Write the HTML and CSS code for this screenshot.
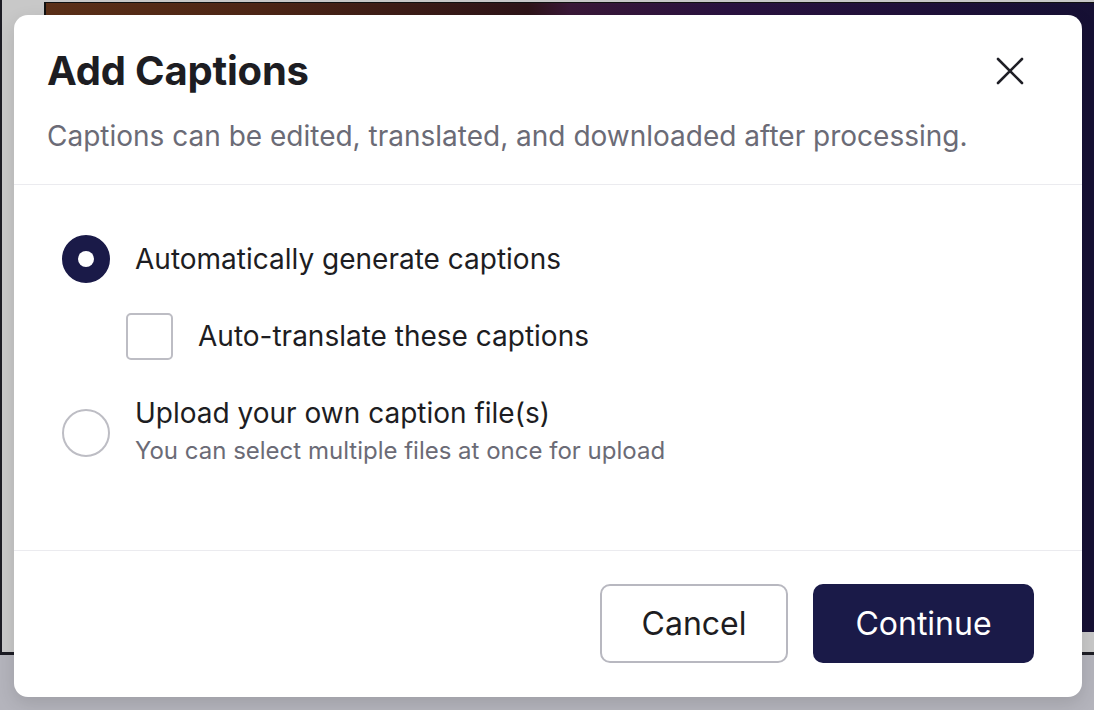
FILE: index.html
```html
<!DOCTYPE html>
<html lang="en">
<head>
<meta charset="utf-8">
<title>Add Captions</title>
<link rel="stylesheet" href="styles.css">
</head>
<body>
<div class="app">
  <div class="stage">
    <div class="thumb"></div>
  </div>
</div>

<div class="modal" role="dialog" aria-labelledby="dlg-title">
  <header class="modal-head">
    <div class="head-row">
      <h1 id="dlg-title" class="title">Add Captions</h1>
      <button class="close" aria-label="Close">
        <svg width="28" height="28" viewBox="0 0 28 28"><path d="M2 2 L26 26 M26 2 L2 26" stroke="#1f1f26" stroke-width="2.6" stroke-linecap="round"/></svg>
      </button>
    </div>
    <p class="subtitle">Captions can be edited, translated, and downloaded after processing.</p>
  </header>

  <div class="modal-body">
    <label class="option">
      <span class="radio checked"></span>
      <span class="opt-text">Automatically generate captions</span>
    </label>
    <label class="option sub">
      <span class="checkbox"></span>
      <span class="opt-text">Auto-translate these captions</span>
    </label>
    <label class="option stacked">
      <span class="radio"></span>
      <span class="opt-stack">
        <span class="opt-text">Upload your own caption file(s)</span>
        <span class="hint">You can select multiple files at once for upload</span>
      </span>
    </label>
  </div>

  <footer class="modal-foot">
    <button class="btn btn-secondary">Cancel</button>
    <button class="btn btn-primary">Continue</button>
  </footer>
</div>
</body>
</html>
```

FILE: styles.css
```css
* { box-sizing: border-box; }

html, body {
  margin: 0;
  padding: 0;
}

body {
  width: 1094px;
  height: 710px;
  overflow: hidden;
  background: #b4b4bc;
  font-family: Inter, "Noto Sans", "Liberation Sans", sans-serif;
  position: relative;
}

.app {
  height: 655px;
  background: #c8c8c8;
  border-left: 2px solid #1c1c24;
  border-bottom: 3px solid #1c1c24;
  padding: 2px 0 20px 42px;
}

.stage {
  height: 630px;
}

.thumb {
  height: 100%;
  border-left: 2px solid #111;
  border-top: 1px solid #111;
  background: linear-gradient(90deg, #5c3018 0%, #4e2616 20%, #2e1418 46%, #3a1838 50%, #2a1240 65%, #161034 100%);
}

.modal {
  position: absolute;
  left: 14px;
  top: 15px;
  width: 1068px;
  height: 682px;
  background: #fff;
  border-radius: 14px;
  box-shadow: 0 6px 18px rgba(0, 0, 0, 0.12);
  display: flex;
  flex-direction: column;
}

.modal-head {
  padding: 30px 33px 0 33px;
  height: 170px;
  border-bottom: 1px solid #ebebef;
}

.head-row {
  display: flex;
  justify-content: space-between;
  align-items: center;
}

.title {
  margin: 0;
  font-size: 40px;
  font-weight: 700;
  color: #1d1d22;
  line-height: 52px;
  letter-spacing: -0.2px;
}

.close {
  border: 0;
  background: none;
  padding: 0;
  margin-right: 25px;
  width: 28px;
  height: 28px;
  display: flex;
}

.subtitle {
  margin: 21px 0 0 0;
  font-size: 28px;
  line-height: 36px;
  color: #6b6b76;
}

.modal-body {
  flex: 1;
  padding: 50px 48px 0 48px;
  border-bottom: 1px solid #ebebef;
  display: flex;
  flex-direction: column;
}

.option {
  display: flex;
  align-items: center;
  gap: 25px;
  min-height: 48px;
}

.option.sub {
  margin-top: 29px;
  padding-left: 64px;
}

.option.stacked {
  margin-top: 35px;
}

.radio {
  width: 48px;
  height: 48px;
  border-radius: 50%;
  border: 2px solid #bdbdc4;
  flex: none;
  display: flex;
  align-items: center;
  justify-content: center;
}

.radio.checked {
  background: #1a1a48;
  border-color: #1a1a48;
}

.radio.checked::after {
  content: "";
  width: 16px;
  height: 16px;
  border-radius: 50%;
  background: #fff;
}

.checkbox {
  width: 47px;
  height: 47px;
  border: 2px solid #bdbdc4;
  border-radius: 5px;
  flex: none;
}

.opt-text {
  font-size: 28px;
  color: #1d1d22;
  line-height: 36px;
}

.opt-stack {
  display: flex;
  flex-direction: column;
}

.hint {
  font-size: 24px;
  line-height: 40px;
  color: #6b6b76;
}

.modal-foot {
  height: 146px;
  display: flex;
  justify-content: flex-end;
  align-items: flex-start;
  gap: 25px;
  padding: 33px 48px 0 0;
}

.btn {
  height: 79px;
  border-radius: 10px;
  font-family: inherit;
  font-size: 32px;
  padding: 0;
}

.btn-secondary {
  width: 188px;
  background: #fff;
  border: 2px solid #b8b8c0;
  color: #1d1d22;
}

.btn-primary {
  width: 221px;
  background: #1a1a48;
  border: 0;
  color: #fff;
}
```
